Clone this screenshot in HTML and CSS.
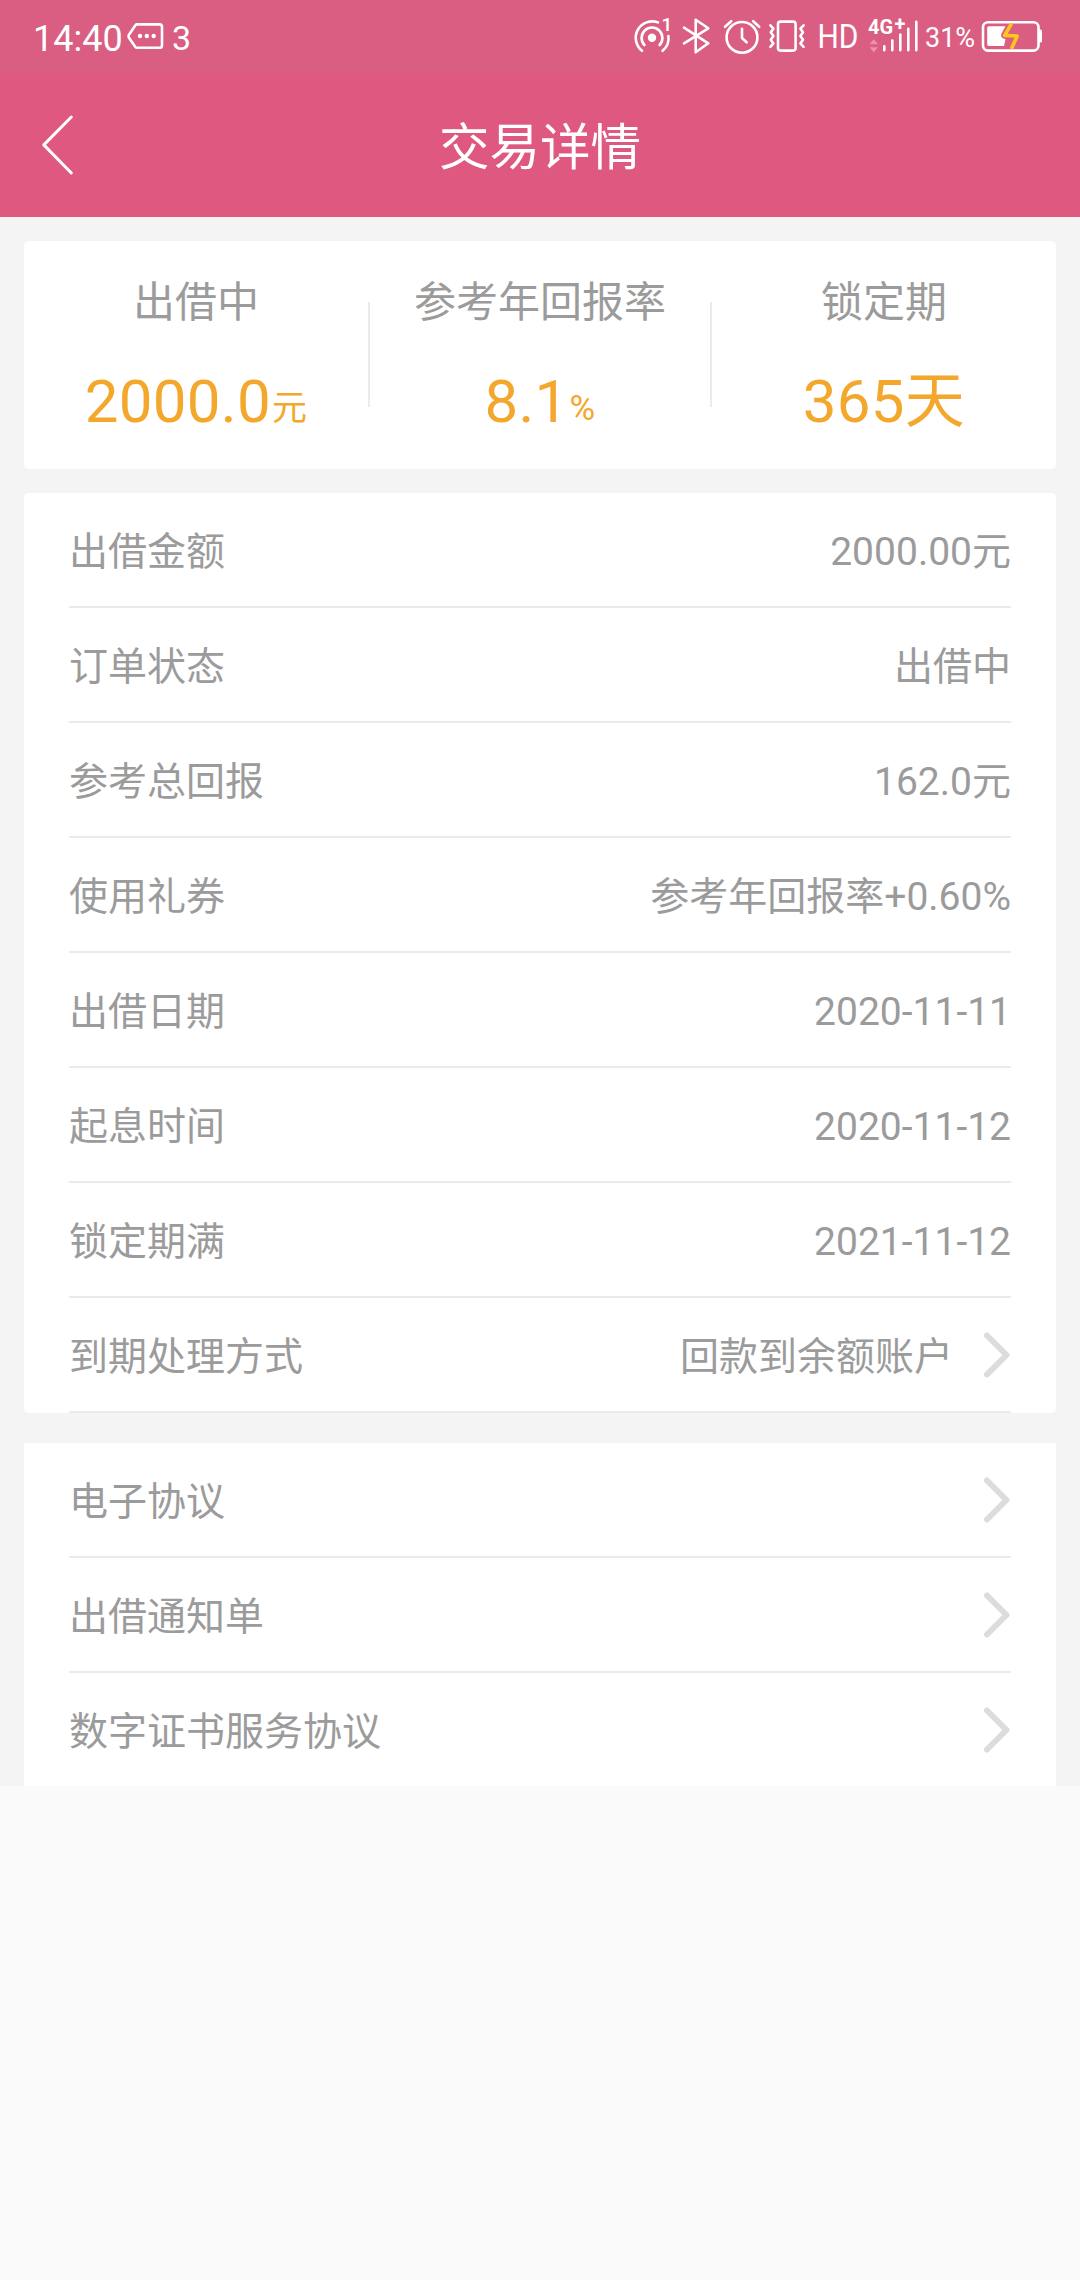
FILE: index.html
```html
<!DOCTYPE html>
<html lang="zh-CN">
<head>
    <meta charset="UTF-8">
    <meta name="viewport" content="width=device-width, initial-scale=1.0">
    <title>交易详情</title>
    <link rel="stylesheet" href="styles.css">
</head>
<body>
    <!-- Status bar -->
    <div class="status-bar">
        <div class="status-left">
            <span class="clock">14:40</span>
            <svg class="icon" width="40" height="73" viewBox="125 0 40 73">
                <path d="M137 24.4H159.5Q162 24.4 162 27V45.2Q162 47.8 159.5 47.8H137Q136 47.8 135.4 47L128.8 37.5Q128.2 36.2 128.8 35L135.4 25.2Q136 24.4 137 24.4Z"/>
                <g class="solid"><circle cx="140" cy="36" r="2.2"/><circle cx="146.8" cy="36" r="2.2"/><circle cx="153.7" cy="36" r="2.2"/></g>
            </svg>
            <span class="count">3</span>
        </div>
        <div class="status-right">
            <!-- hotspot -->
            <svg class="icon" width="48" height="73" viewBox="630 0 48 73">
                <circle class="solid" cx="652" cy="37.7" r="4.2"/>
                <path d="M644.4 45A10.4 10.4 0 1 1 659.6 45M642 50.8A16.5 16.5 0 0 1 658 22.4M668.4 36A16.5 16.5 0 0 1 662.6 50.8"/>
                <text class="tiny" x="661.5" y="31">1</text>
            </svg>
            <!-- bluetooth -->
            <svg class="icon" width="42" height="73" viewBox="678 0 42 73">
                <path d="M684 27.7L708.3 43.3L695.7 52.3V19.7L708.3 28.3L684 43.3"/>
            </svg>
            <!-- alarm -->
            <svg class="icon" width="46" height="73" viewBox="720 0 46 73">
                <circle cx="742" cy="37.4" r="15.4"/>
                <path d="M742 28.7V38L746.6 42.3M725 26.8L731.2 21.2M753.2 21.2L759.2 26.8"/>
            </svg>
            <!-- vibrate -->
            <svg class="icon" width="48" height="73" viewBox="766 0 48 73">
                <rect x="778" y="21.6" width="17.6" height="29" rx="2.5"/>
                <path d="M770.4 25.3L773.4 28.7L770.8 32.2L773.4 36L770.8 39.8L773.4 43.4L770.4 46.8M803.6 25.3L800.4 28.7L803 32.2L800.4 36L803 39.8L800.4 43.4L803.6 46.8"/>
            </svg>
            <svg class="icon" width="50" height="73" viewBox="814 0 50 73">
                <text class="hd" x="817.5" y="47.6" textLength="41" lengthAdjust="spacingAndGlyphs">HD</text>
            </svg>
            <!-- signal -->
            <svg class="icon" width="60" height="73" viewBox="864 0 60 73">
                <text class="net" x="868" y="34">4G</text>
                <text class="net" x="894.5" y="30.5">+</text>
                <path class="data" d="M873.7 39.3L878 44.3H869.4ZM869.4 47.2H878L873.7 52.2Z"/>
                <path d="M884.3 46.3V50.3M892.3 40.5V50.3M900.3 34.5V50.3M908.3 28.8V50.3M916.3 21.8V50.3"/>
            </svg>
            <span class="percent">31%</span>
            <!-- battery -->
            <svg class="icon" width="64" height="73" viewBox="978 0 64 73">
                <rect x="983" y="22.2" width="55.5" height="28.4" rx="5"/>
                <path class="solid" d="M1039 29.5H1040.5Q1042 29.5 1042 31V41Q1042 42.5 1040.5 42.5H1039Z"/>
                <path class="solid" d="M989 26.2H1005.5L1001.5 33.5Q1000.3 36.5 1002.5 38L1005.5 39.3L1004 46H989Q987.2 46 987.2 44.2V28Q987.2 26.2 989 26.2Z"/>
                <path class="bolt" d="M1010.8 24.8L1004.6 35.4L1017.2 36L1012 47.5"/>
            </svg>
        </div>
    </div>

    <div class="header">
        <svg class="back" width="40" height="66" viewBox="0 0 40 66">
            <path d="M32.3 5L4.8 32.9L32.3 61"/>
        </svg>
        <h1>交易详情</h1>
    </div>

    <div class="content">
        <!-- Summary -->
        <div class="card summary">
            <div class="summary-item">
                <p class="label">出借中</p>
                <p class="value">2000.0<small>元</small></p>
            </div>
            <div class="summary-item">
                <p class="label">参考年回报率</p>
                <p class="value">8.1<small>%</small></p>
            </div>
            <div class="summary-item">
                <p class="label">锁定期</p>
                <p class="value">365天</p>
            </div>
        </div>

        <!-- Order details -->
        <div class="card list">
            <div class="row"><span>出借金额</span><span>2000.00元</span></div>
            <div class="row"><span>订单状态</span><span>出借中</span></div>
            <div class="row"><span>参考总回报</span><span>162.0元</span></div>
            <div class="row"><span>使用礼券</span><span>参考年回报率+0.60%</span></div>
            <div class="row"><span>出借日期</span><span>2020-11-11</span></div>
            <div class="row"><span>起息时间</span><span>2020-11-12</span></div>
            <div class="row"><span>锁定期满</span><span>2021-11-12</span></div>
            <div class="row">
                <span>到期处理方式</span>
                <span class="push">回款到余额账户</span>
                <svg class="arrow" width="27" height="46" viewBox="0 0 27 46"><path d="M3 3.5L22.5 23L3 42.5"/></svg>
            </div>
        </div>

        <!-- Agreements -->
        <div class="card list agreements">
            <div class="row"><span>电子协议</span><svg class="arrow" width="27" height="46" viewBox="0 0 27 46"><path d="M3 3.5L22.5 23L3 42.5"/></svg></div>
            <div class="row"><span>出借通知单</span><svg class="arrow" width="27" height="46" viewBox="0 0 27 46"><path d="M3 3.5L22.5 23L3 42.5"/></svg></div>
            <div class="row"><span>数字证书服务协议</span><svg class="arrow" width="27" height="46" viewBox="0 0 27 46"><path d="M3 3.5L22.5 23L3 42.5"/></svg></div>
        </div>
    </div>
</body>
</html>
```
FILE: styles.css
```css
* {
    box-sizing: border-box;
}

body {
    font-family: Roboto, "Noto Sans CJK SC", sans-serif;
    margin: 0;
    min-height: 100vh;
    background: #fafafa;
    color: #9b9b9b;
}

h1, p {
    margin: 0;
    font-weight: normal;
}

/* Status bar */
.status-bar {
    display: flex;
    justify-content: space-between;
    height: 73px;
    padding: 0 38px 0 33px;
    background: #da5d82;
    color: #fff;
    line-height: 73px;
}

.status-left,
.status-right {
    display: flex;
}

.clock {
    width: 92px;
    font-size: 36px;
    line-height: 79px;
}

.count {
    margin-left: 7px;
    font-size: 34px;
    line-height: 76px;
}

.percent {
    width: 54px;
    padding-left: 1px;
    font-size: 27px;
    line-height: 77px;
}

.icon {
    display: block;
    fill: none;
    stroke: #fff;
    stroke-width: 2.6;
    stroke-linecap: round;
    stroke-linejoin: round;
}

.icon text,
.icon .solid {
    fill: #fff;
    stroke: none;
}

.tiny {
    font-size: 19px;
    font-weight: 500;
}

.hd {
    font-size: 33px;
}

.net {
    font-size: 20px;
    font-weight: bold;
}

.icon .data {
    fill: #f08fae;
    stroke: none;
}

.icon .bolt {
    stroke: #ffc61e;
    stroke-width: 3.6;
}

/* Title bar */
.header {
    display: grid;
    grid-template-columns: 120px 1fr 120px;
    align-items: center;
    height: 144px;
    background: #df5880;
    color: #fff;
}

.header h1 {
    padding-top: 5px;
    font-size: 50.5px;
    line-height: 72px;
    text-align: center;
}

.back {
    margin-left: 39px;
    fill: none;
    stroke: #fff;
    stroke-width: 3;
    stroke-linecap: round;
    stroke-linejoin: round;
}

.content {
    padding: 24px 24px 0;
    background: #f4f4f4;
}

.card {
    background: #fff;
    border-radius: 5px;
}

/* Three column summary */
.summary {
    display: grid;
    grid-template-columns: repeat(3, 1fr);
    height: 228px;
    text-align: center;
}

.summary-item {
    padding-top: 31px;
}

/* Short dividers on both sides of the middle column */
.summary-item:nth-child(2) {
    background:
        linear-gradient(#ebebeb, #ebebeb) left 61px / 2px 105px no-repeat,
        linear-gradient(#ebebeb, #ebebeb) right 61px / 2px 105px no-repeat;
}

.label {
    font-size: 42px;
    line-height: 62px;
}

.value {
    margin-top: 23px;
    color: #f3a72c;
    font-size: 60px;
    line-height: 90px;
    letter-spacing: 0.3px;
}

.value small {
    margin-left: 1px;
    font-size: 35px;
    line-height: 1;
    vertical-align: 2px;
}

/* Rows */
.list {
    margin-top: 24px;
    padding: 0 45px;
}

.row {
    display: flex;
    justify-content: space-between;
    align-items: center;
    height: 115px;
    border-bottom: 2px solid #ebebeb;
    font-size: 39px;
    line-height: 58px;
}

.row span {
    padding-top: 4px;
}

.push {
    margin-left: auto;
}

.push + .arrow {
    margin-left: 31px;
}

.arrow {
    fill: none;
    stroke: #dcdcdc;
    stroke-width: 6;
    stroke-linecap: round;
    stroke-linejoin: round;
}

.agreements {
    margin-top: 30px;
    border-radius: 0;
}

.agreements .row:last-child {
    height: 113px;
    border-bottom: none;
}
```
